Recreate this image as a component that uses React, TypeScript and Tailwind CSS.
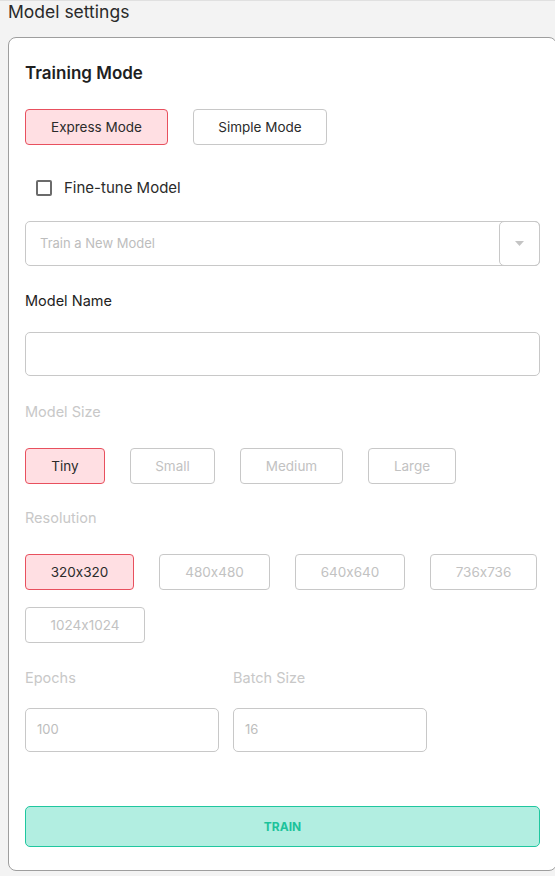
import { useState } from 'react';

// Inter turns "320x320" into "320×320" through calt, so switch that off
const FONT = { fontFamily: 'Inter, "Noto Sans", sans-serif', fontFeatureSettings: '"calt" 0' };

function Choice({ label, active, width, onClick }: { label: string; active: boolean; width: string; onClick: () => void }) {
  return (
    <button
      onClick={onClick}
      className={`h-[36px] ${width} rounded-[4px] border text-[13.5px] flex items-center justify-center ${active
        ? 'bg-[#ffdfe3] border-[#e8505e] text-[#2b2b2b]'
        : 'bg-white border-[#c8c8c8] text-[#c2c2c2]'
        }`}
    >
      {label}
    </button>
  );
}

export default function App() {
  const [mode, setMode] = useState('express');
  const [size, setSize] = useState('Tiny');
  const [res, setRes] = useState('320x320');
  const [fineTune, setFineTune] = useState(false);

  const sizes = [
    { name: 'Tiny', w: 'w-[80px]' },
    { name: 'Small', w: 'w-[85px]' },
    { name: 'Medium', w: 'w-[103px]' },
    { name: 'Large', w: 'w-[88px]' },
  ];
  const resolutions = [
    { name: '320x320', w: 'w-[109px]' },
    { name: '480x480', w: 'w-[111px]' },
    { name: '640x640', w: 'w-[110px]' },
    { name: '736x736', w: 'w-[107px]' },
    { name: '1024x1024', w: 'w-[120px]' },
  ];

  return (
    <div className="min-h-[876px] w-[555px] overflow-hidden bg-[#f3f3f3] border-t border-[#e0e0e0]" style={FONT}>
      <div className="pl-[8px] text-[17.5px] leading-[22px] text-[#2a2a2a]">Model settings</div>

      <div className="ml-[8px] mt-[14px] w-[549px] bg-white border border-[#9e9e9e] rounded-[8px] px-[16px] pt-[23px] pb-[23px]">
        {/* Training mode */}
        <div className="text-[17px] leading-[24px] font-semibold text-[#1f1f1f]">Training Mode</div>
        <div className="mt-[24px] flex gap-[25px]">
          <button
            onClick={() => setMode('express')}
            className={`h-[36px] w-[143px] rounded-[4px] border text-[13.5px] ${mode === 'express' ? 'bg-[#ffdfe3] border-[#e8505e]' : 'bg-white border-[#c8c8c8]'} text-[#2b2b2b]`}
          >
            Express Mode
          </button>
          <button
            onClick={() => setMode('simple')}
            className={`h-[36px] w-[134px] rounded-[4px] border text-[13.5px] ${mode === 'simple' ? 'bg-[#ffdfe3] border-[#e8505e]' : 'bg-white border-[#c8c8c8]'} text-[#2b2b2b]`}
          >
            Simple Mode
          </button>
        </div>

        <label className="mt-[33px] ml-[11px] flex items-center gap-[12px] h-[20px] cursor-pointer">
          <span
            onClick={() => setFineTune(!fineTune)}
            className={`w-[16px] h-[16px] rounded-[2px] border-2 border-[#6b6b6b] ${fineTune ? 'bg-[#6b6b6b]' : 'bg-white'}`}
          />
          <span className="text-[15px] text-[#2b2b2b]">Fine-tune Model</span>
        </label>

        {/* Select */}
        <div className="mt-[23px] h-[45px] flex rounded-[5px] border border-[#c8c8c8]">
          <div className="flex-1 flex items-center pl-[14px] text-[13px] text-[#bdbdbd]">Train a New Model</div>
          <div className="w-[41px] -my-px -mr-px border border-[#c8c8c8] rounded-[5px] flex items-center justify-center">
            <svg width="9" height="5" viewBox="0 0 9 5">
              <path d="M0 0 L9 0 L4.5 5 Z" fill="#c4c4c4" />
            </svg>
          </div>
        </div>

        {/* Model name */}
        <div className="mt-[25px] text-[14.5px] leading-[20px] text-[#222]">Model Name</div>
        <input className="mt-[21px] h-[44px] w-full rounded-[5px] border border-[#c8c8c8] outline-none px-[12px]" />

        {/* Model size */}
        <div className="mt-[26px] text-[14.5px] leading-[20px] text-[#c8c8c8]">Model Size</div>
        <div className="mt-[26px] flex gap-[25px]">
          {sizes.map(s => (
            <Choice key={s.name} label={s.name} width={s.w} active={size === s.name} onClick={() => setSize(s.name)} />
          ))}
        </div>

        {/* Resolution */}
        <div className="mt-[24px] text-[14.5px] leading-[20px] text-[#c8c8c8]">Resolution</div>
        <div className="mt-[26px] flex flex-wrap gap-x-[25px] gap-y-[17px] w-[520px]">
          {resolutions.map(r => (
            <Choice key={r.name} label={r.name} width={r.w} active={res === r.name} onClick={() => setRes(r.name)} />
          ))}
        </div>

        {/* Epochs / batch */}
        <div className="mt-[25px] flex gap-[14px]">
          <div className="w-[194px]">
            <div className="text-[14.5px] leading-[20px] text-[#c8c8c8]">Epochs</div>
            <div className="mt-[20px] h-[44px] rounded-[5px] border border-[#c8c8c8] flex items-center pl-[11px] text-[13px] text-[#bdbdbd]">100</div>
          </div>
          <div className="w-[194px]">
            <div className="text-[14.5px] leading-[20px] text-[#c8c8c8]">Batch Size</div>
            <div className="mt-[20px] h-[44px] rounded-[5px] border border-[#c8c8c8] flex items-center pl-[11px] text-[13px] text-[#bdbdbd]">16</div>
          </div>
        </div>

        <button className="mt-[54px] h-[41px] w-full rounded-[5px] border border-[#1fc79f] bg-[#b2eee1] text-[12px] font-bold text-[#1dc39b]">
          TRAIN
        </button>
      </div>
    </div>
  );
}
